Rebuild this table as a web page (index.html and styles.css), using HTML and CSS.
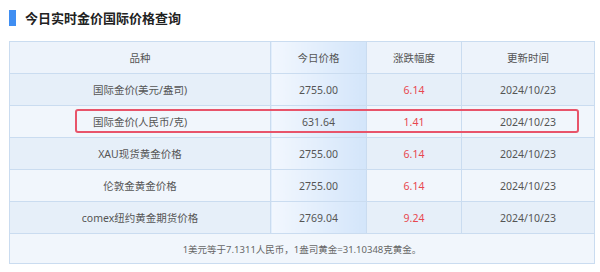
FILE: index.html
```html
<!DOCTYPE html>
<html lang="zh-CN">
<head>
<meta charset="utf-8">
<link rel="stylesheet" href="styles.css">
</head>
<body>
<div class="title"><span class="bar"></span><h2>今日实时金价国际价格查询</h2></div>
<div class="wrap">
<table class="gold">
<colgroup><col class="c1"><col class="c2"><col class="c3"><col class="c4"></colgroup>
<thead>
<tr><th>品种</th><th class="price">今日价格</th><th>涨跌幅度</th><th>更新时间</th></tr>
</thead>
<tbody>
<tr class="odd"><td>国际金价(美元/盎司)</td><td class="price">2755.00</td><td class="up">6.14</td><td>2024/10/23</td></tr>
<tr class="even"><td>国际金价(人民币/克)</td><td class="price">631.64</td><td class="up">1.41</td><td>2024/10/23</td></tr>
<tr class="odd"><td>XAU现货黄金价格</td><td class="price">2755.00</td><td class="up">6.14</td><td>2024/10/23</td></tr>
<tr class="even"><td>伦敦金黄金价格</td><td class="price">2755.00</td><td class="up">6.14</td><td>2024/10/23</td></tr>
<tr class="odd"><td>comex纽约黄金期货价格</td><td class="price">2769.04</td><td class="up">9.24</td><td>2024/10/23</td></tr>
<tr class="foot"><td colspan="4">1美元等于7.1311人民币，1盎司黄金=31.10348克黄金。</td></tr>
</tbody>
</table>
<div class="highlight"></div>
</div>
</body>
</html>
```
FILE: styles.css
```css
html, body {
  margin: 0;
  padding: 0;
  background: #fff;
  font-family: "Noto Sans", "Noto Sans CJK SC", sans-serif;
}
.title {
  display: flex;
  align-items: center;
  gap: 9px;
  margin: 10px 0 15px 9px;
  height: 16px;
}
.bar {
  width: 7px;
  height: 16px;
  background: #3f8ef2;
}
.title h2 {
  margin: 0;
  font-size: 13px;
  line-height: 16px;
  font-weight: bold;
  color: #222;
  font-family: "Noto Sans CJK SC", sans-serif;
}
.wrap {
  position: relative;
  margin-left: 9px;
  width: 585px;
}
.gold {
  border-collapse: collapse;
  table-layout: fixed;
  width: 585px;
  font-size: 10.5px;
  color: #555;
}
.c1 { width: 261px; }
.c2 { width: 96px; }
.c3 { width: 95px; }
.c4 { width: 133px; }
.gold th, .gold td {
  border: 1px solid #cadcf0;
  height: 31px;
  padding: 0;
  text-align: center;
  font-weight: normal;
  white-space: nowrap;
}
.gold thead tr { background: #edf3fb; }
.gold tr.odd { background: #e6eff9; }
.gold tr.even { background: #f1f6fc; }
.gold tr.foot { background: #f1f6fc; }
.gold tr.foot td {
  height: 29px;
  font-size: 9.5px;
  color: #666;
}
.gold td.price, .gold th.price {
  background: linear-gradient(to right, #f2f7fe, #d3e5fa);
}
.gold td.up { color: #e8474f; }
.highlight {
  position: absolute;
  left: 66px;
  top: 68px;
  width: 500px;
  height: 20px;
  border: 2px solid #e8546a;
  border-radius: 3px;
}
```
